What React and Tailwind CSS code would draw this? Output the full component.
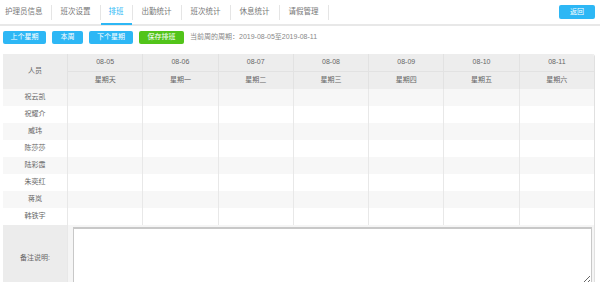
import React from 'react'

const tabs = ['护理员信息', '班次设置', '排班', '出勤统计', '班次统计', '休息统计', '请假管理']
const days = [
  ['08-05', '星期天'],
  ['08-06', '星期一'],
  ['08-07', '星期二'],
  ['08-08', '星期三'],
  ['08-09', '星期四'],
  ['08-10', '星期五'],
  ['08-11', '星期六'],
]
const people = ['祝云凯', '祝耀介', '威玮', '陈莎莎', '陆彩霞', '朱奕红', '蒋岚', '韩铁宇']

function App() {
  return (
    <div className="w-[600px] h-[282px] overflow-hidden bg-white text-[#666] font-['Liberation_Sans','Noto_Sans_CJK_SC',sans-serif]">
      {/* tabs */}
      <div className="flex items-center h-[26px] border-b-2 border-[#e8e8e8] pr-[5px]">
        {tabs.map((t, i) => (
          <div key={t} className="flex items-center h-full">
            <div
              className={
                i === 2
                  ? 'h-full flex items-center px-[8px] text-[7.5px] text-[#2db7f5] border-b-2 border-[#2db7f5] -mb-[2px]'
                  : i === 0
                  ? 'h-full flex items-center pl-[5px] pr-[8px] text-[7.5px] text-[#777]'
                  : 'h-full flex items-center px-[9px] text-[7.5px] text-[#777]'
              }
            >
              {t}
            </div>
            <div className="w-px h-[15px] bg-[#e5e5e5]" />
          </div>
        ))}
        <div className="flex-1" />
        <button className="w-[36px] h-[14px] rounded-[2px] bg-[#2db7f5] text-white text-[7px]">返回</button>
      </div>

      {/* toolbar */}
      <div className="flex items-center gap-[6px] px-[3px] mt-[5px] h-[13px]">
        <button className="w-[43px] h-[13px] rounded-[2px] bg-[#2db7f5] text-white text-[7px]">上个星期</button>
        <button className="w-[31px] h-[13px] rounded-[2px] bg-[#2db7f5] text-white text-[7px]">本周</button>
        <button className="w-[44px] h-[13px] rounded-[2px] bg-[#2db7f5] text-white text-[7px]">下个星期</button>
        <button className="w-[45px] h-[13px] rounded-[2px] bg-[#52c41a] text-white text-[7px]">保存排班</button>
        <span className="text-[7px] text-[#888]">当前周的周期：2019-08-05至2019-08-11</span>
      </div>

      {/* table */}
      <div className="ml-[3px] mr-[5px] mt-[10px] rounded-tr-[3px] overflow-hidden border-r border-[#e0e0e0]">
        <div className="grid grid-cols-[64px_repeat(7,1fr)] bg-[#ededed] text-[7px] text-[#666]">
          <div className="row-span-2 flex items-center justify-center">人员</div>
          {days.map(([d]) => (
            <div key={d} className="h-[18px] flex items-center justify-center border-l border-b border-[#e2e2e2]">{d}</div>
          ))}
          {days.map(([d, w]) => (
            <div key={w} className="h-[17px] flex items-center justify-center border-l border-[#e2e2e2]">{w}</div>
          ))}
        </div>
        {people.map((p, i) => (
          <div
            key={p}
            className={
              i % 2 === 0
                ? 'grid grid-cols-[64px_repeat(7,1fr)] h-[17px] bg-[#f7f7f7] text-[7px]'
                : 'grid grid-cols-[64px_repeat(7,1fr)] h-[17px] bg-white text-[7px]'
            }
          >
            <div className="flex items-center justify-center">{p}</div>
            {days.map(([d]) => (
              <div key={d} className="border-l border-[#e8e8e8]" />
            ))}
          </div>
        ))}
        <div className="grid grid-cols-[64px_1fr] h-[58px] bg-[#f5f5f5]">
          <div className="flex items-center justify-center bg-[#ececec] text-[7px]">备注说明:</div>
          <div className="pl-[5px] pr-[2px] pt-[2px] pb-[6px] border-l border-[#e8e8e8]">
            <textarea className="w-full h-full bg-white border border-[#c8c8c8] border-t-2 resize-y outline-none" />
          </div>
        </div>
      </div>
    </div>
  )
}

export default App
